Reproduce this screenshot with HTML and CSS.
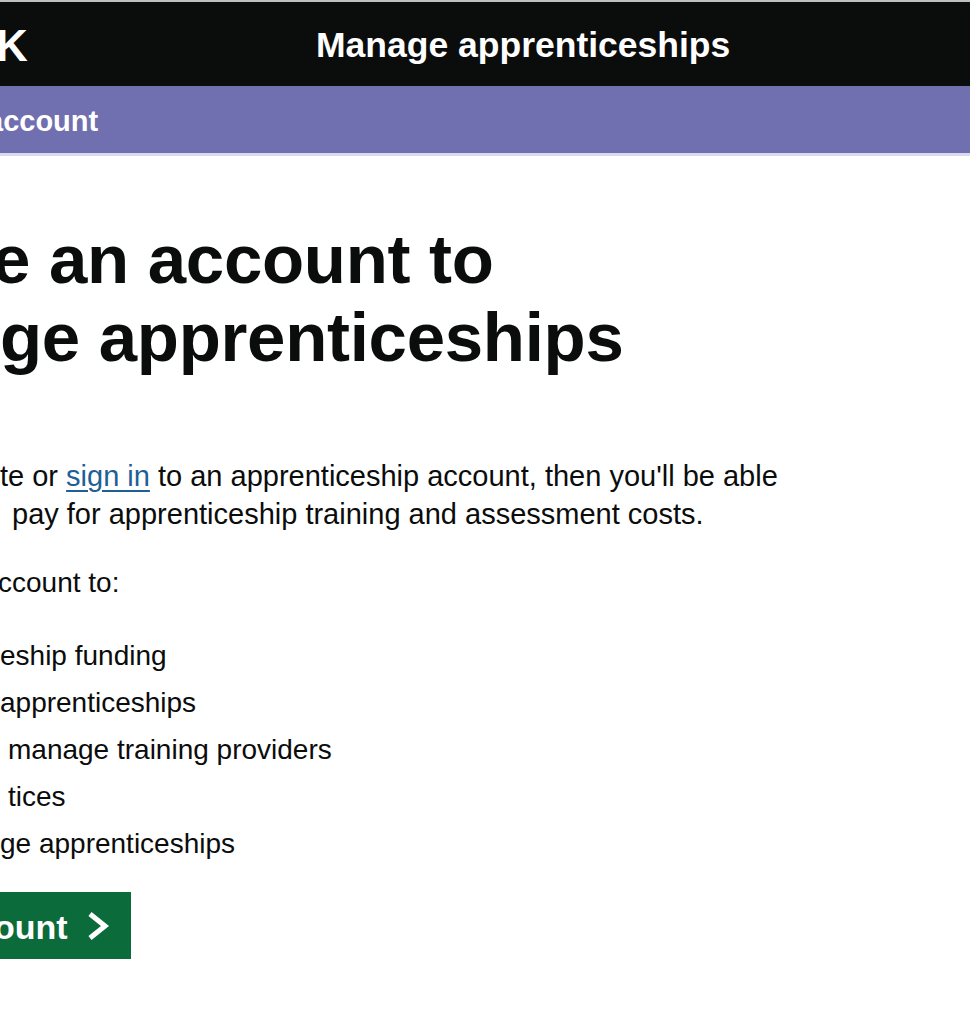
FILE: index.html
```html
<!DOCTYPE html>
<html lang="en">
<head>
<meta charset="utf-8">
<title>Create an account to manage apprenticeships</title>
<link rel="stylesheet" href="styles.css">
</head>
<body>
<div class="topline"></div>
<header class="header">
  <div class="logo-wrap"><span class="logo">K</span></div>
  <span class="service">Manage apprenticeships</span>
</header>
<div class="phase"><span class="phase-text">account</span></div>
<main class="main">
  <h1 class="title">
    <span class="line title-l1">e an account to</span>
    <span class="line">ge apprenticeships</span>
  </h1>
  <p class="body">
    <span class="line">te or <a class="link" href="#">sign in</a> to an apprenticeship account, then you'll be able</span>
    <span class="line indent">pay for apprenticeship training and assessment costs.</span>
  </p>
  <p class="body body-lead">ccount to:</p>
  <ul class="list">
    <li>eship funding</li>
    <li>apprenticeships</li>
    <li class="indent-s">manage training providers</li>
    <li class="indent-s">tices</li>
    <li>ge apprenticeships</li>
  </ul>
  <button class="btn" type="button"><span class="btn-text">ount</span><svg class="chev" width="24" height="30" viewBox="0 0 24 30"><polyline points="4,3 19,15 4,27" fill="none" stroke="#ffffff" stroke-width="5" stroke-linejoin="miter"/></svg></button>
</main>
</body>
</html>
```

FILE: styles.css
```css
html, body {
  margin: 0;
  padding: 0;
  background: #ffffff;
  overflow: hidden;
}
body {
  width: 970px;
  height: 1024px;
  font-family: "Liberation Sans", Arial, sans-serif;
  color: #0b0c0c;
}
.topline {
  height: 2px;
  background: #bfbfbf;
}
.header {
  height: 84px;
  background: #0b0c0c;
  color: #ffffff;
  display: flex;
  align-items: flex-start;
  padding-top: 21px;
  box-sizing: border-box;
}
.logo-wrap {
  width: 316px;
  flex: none;
  overflow: hidden;
}
.logo {
  display: block;
  font-weight: 700;
  font-size: 44px;
  line-height: 46px;
  margin-left: -4px;
}
.service {
  font-weight: 700;
  font-size: 35.5px;
  line-height: 40px;
  margin-top: 2px;
  white-space: nowrap;
}
.phase {
  height: 70px;
  background: #7070b0;
  border-bottom: 3px solid #d9d9ef;
  box-sizing: border-box;
  padding-top: 19px;
  overflow: hidden;
  color: #ffffff;
}
.phase-text {
  display: block;
  font-weight: 700;
  font-size: 29px;
  line-height: 32px;
  margin-left: -13px;
}
.main {
  overflow: hidden;
}
.line {
  display: block;
  white-space: nowrap;
}
.title {
  margin: 65px 0 0 0;
  font-weight: 700;
  font-size: 69px;
  line-height: 78px;
  letter-spacing: -0.3px;
}
.title-l1 {
  margin-left: -8px;
}
.body {
  margin: 80px 0 0 0;
  font-size: 29px;
  line-height: 38px;
}
.body-lead {
  margin-top: 31px;
  margin-left: -2px;
  font-size: 28px;
}
.indent {
  padding-left: 12px;
}
.link {
  color: #1f5f96;
  text-decoration: underline;
  text-decoration-thickness: 2px;
  text-underline-offset: 4px;
}
.list {
  list-style: none;
  margin: 30px 0 0 0;
  padding: 0;
  font-size: 28px;
  line-height: 47px;
}
.list li {
  white-space: nowrap;
}
.indent-s {
  padding-left: 8px;
}
.btn {
  margin-top: 25px;
  display: flex;
  align-items: center;
  gap: 18px;
  height: 67px;
  width: 131px;
  padding: 0;
  border: 0;
  background: #0b6b3a;
  box-shadow: 0 3px 0 #00331a;
  color: #ffffff;
  font-family: "Liberation Sans", Arial, sans-serif;
  font-weight: 700;
  font-size: 34px;
  line-height: 36px;
  overflow: hidden;
}
.btn-text {
  margin-left: -6px;
  padding-top: 2px;
}
.chev {
  flex: none;
}
```
